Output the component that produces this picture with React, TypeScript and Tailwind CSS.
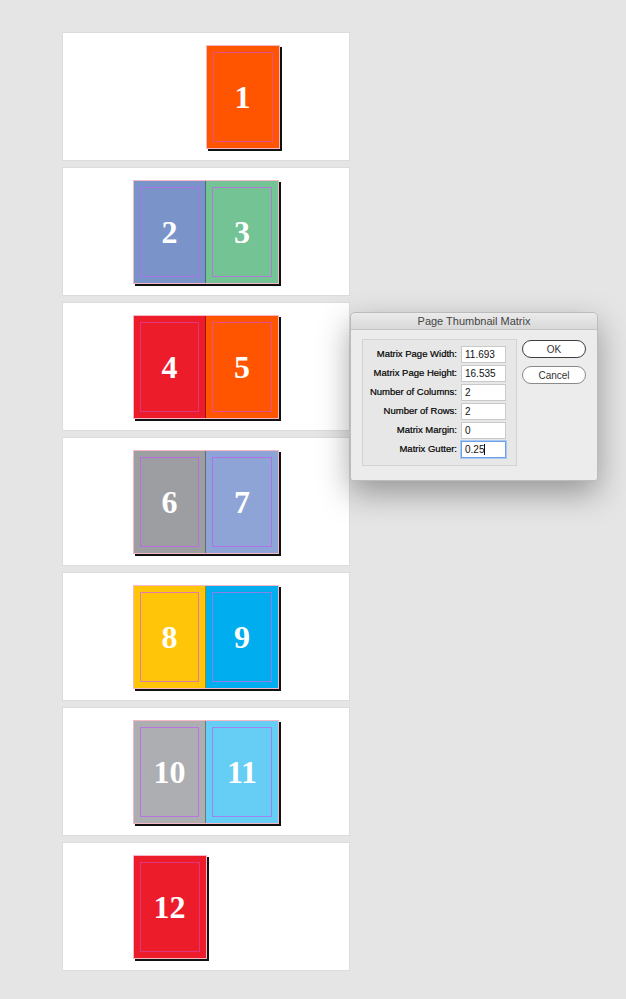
import React from "react";

type Pg = { n: number; bg: string; guide: string };

const spreads: { left?: Pg; right?: Pg }[] = [
  { right: { n: 1, bg: "bg-[#ff5500]", guide: "border-[#e8508a]" } },
  {
    left: { n: 2, bg: "bg-[#7a93c9]", guide: "border-[#a772e6]" },
    right: { n: 3, bg: "bg-[#73c394]", guide: "border-[#b07ad8]" },
  },
  {
    left: { n: 4, bg: "bg-[#ed1c2a]", guide: "border-[#e0357e]" },
    right: { n: 5, bg: "bg-[#ff5500]", guide: "border-[#e8508a]" },
  },
  {
    left: { n: 6, bg: "bg-[#9c9ea1]", guide: "border-[#b66ee2]" },
    right: { n: 7, bg: "bg-[#8fa4d6]", guide: "border-[#b070e6]" },
  },
  {
    left: { n: 8, bg: "bg-[#ffc609]", guide: "border-[#e07ab0]" },
    right: { n: 9, bg: "bg-[#00adee]", guide: "border-[#8a80e8]" },
  },
  {
    left: { n: 10, bg: "bg-[#adaeb1]", guide: "border-[#b875e0]" },
    right: { n: 11, bg: "bg-[#66cdf5]", guide: "border-[#9a86ee]" },
  },
  { left: { n: 12, bg: "bg-[#ed1c2a]", guide: "border-[#e0357e]" } },
];

const fields = [
  { label: "Matrix Page Width:", value: "11.693" },
  { label: "Matrix Page Height:", value: "16.535" },
  { label: "Number of Columns:", value: "2" },
  { label: "Number of Rows:", value: "2" },
  { label: "Matrix Margin:", value: "0" },
  { label: "Matrix Gutter:", value: "0.25", focus: true },
];

const Page = ({ p, spine }: { p: Pg; spine?: boolean }) => (
  <div
    className={`relative w-[72px] h-[102px] ${p.bg} flex items-center justify-center ${
      spine ? "border-r border-r-[#00000055]" : ""
    }`}
  >
    <div className={`absolute inset-[6px] border ${p.guide}`} />
    <span className="relative text-white text-[32px] font-bold leading-none [font-family:'Liberation_Serif',serif]">
      {p.n}
    </span>
  </div>
);

const App = () => {
  return (
    <div className="relative w-[626px] h-[999px] bg-[#e5e5e5] overflow-hidden">
      <div className="flex flex-col gap-[6px] pt-[32px] pl-[62px]">
        {spreads.map((s, i) => (
          <div
            key={i}
            className="w-[288px] h-[129px] bg-white border border-[#dcdcdc] flex items-center justify-center"
          >
            {s.left && s.right ? (
              <div className="flex border border-[#f6b8c4] shadow-[2px_2px_0_#111]">
                <Page p={s.left} spine />
                <Page p={s.right} />
              </div>
            ) : s.right ? (
              <div className="flex">
                <div className="w-[73px]" />
                <div className="flex border border-[#f6b8c4] shadow-[2px_2px_0_#111]">
                  <Page p={s.right} />
                </div>
              </div>
            ) : s.left ? (
              <div className="flex">
                <div className="flex border border-[#f6b8c4] shadow-[2px_2px_0_#111]">
                  <Page p={s.left} />
                </div>
                <div className="w-[73px]" />
              </div>
            ) : null}
          </div>
        ))}
      </div>

      {/* dialog */}
      <div className="absolute left-[350px] top-[312px] w-[248px] h-[169px] bg-[#ececec] rounded-t-[5px] rounded-b-[3px] border border-[#bcbcbc] shadow-[0_12px_32px_rgba(0,0,0,0.35)] [font-family:'Liberation_Sans',Arial,sans-serif]">
        <div className="h-[17px] rounded-t-[5px] bg-gradient-to-b from-[#ebebeb] to-[#d9d9d9] border-b border-[#c4c4c4] flex items-center justify-center text-[11px] text-[#444]">
          Page Thumbnail Matrix
        </div>
        <div className="flex gap-[5px] pl-[11px] pt-[9px]">
          <div className="w-[155px] h-[127px] bg-[#e7e7e7] border border-[#d3d3d3] pt-[6px] pr-[10px] flex flex-col gap-[2px]">
            {fields.map((f) => (
              <div key={f.label} className="flex items-center justify-end gap-[4px] h-[17px]">
                <span className="text-[9.5px] text-[#000] whitespace-nowrap [-webkit-text-stroke:0.2px_#000]">
                  {f.label}
                </span>
                <div
                  className={`w-[45px] h-[17px] bg-white flex items-center pl-[3px] text-[10px] text-[#111] ${
                    f.focus
                      ? "border border-[#6ea0e6] shadow-[0_0_0_1px_#a9c8f2]"
                      : "border border-[#c9c9c9]"
                  }`}
                >
                  {f.value}
                  {f.focus && <span className="w-px h-[11px] bg-[#111]" />}
                </div>
              </div>
            ))}
          </div>
          <div className="flex flex-col gap-[8px] pt-[1px]">
            <div className="w-[64px] h-[18px] rounded-full border-[1.5px] border-[#3d3d3d] bg-white flex items-center justify-center text-[10px] text-[#333]">
              OK
            </div>
            <div className="w-[64px] h-[18px] rounded-full border border-[#8a8a8a] bg-white flex items-center justify-center text-[10px] text-[#333]">
              Cancel
            </div>
          </div>
        </div>
      </div>
    </div>
  );
};

export default App;
